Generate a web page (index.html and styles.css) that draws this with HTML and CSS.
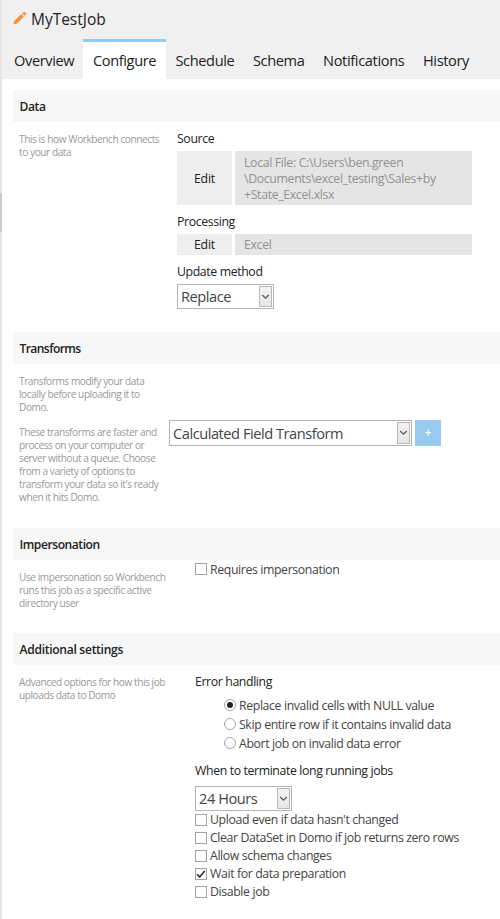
FILE: index.html
```
<!DOCTYPE html>
<html lang="en">
<head>
<meta charset="utf-8">
<title>MyTestJob</title>
<link rel="stylesheet" href="styles.css">
</head>
<body>
<div class="app">
  <aside class="rail"><div class="rail-thumb"></div></aside>
  <main class="panel">
    <header class="header">
      <div class="title-row">
        <svg class="pencil" width="14" height="14" viewBox="0 0 14 14"><path d="M1 10.2 8.3 3.1l2.5 2.6-7.2 7L.7 13.3zM9.1 2.3l1.4-1.4q.6-.5 1.2 0l1.2 1.2q.6.6 0 1.2l-1.3 1.5z" fill="#fb8d34"/></svg>
        <h1><span>MyTestJob</span></h1>
      </div>
      <nav class="tabs">
        <a class="tab overview"><span>Overview</span></a>
        <a class="tab configure active"><span>Configure</span></a>
        <a class="tab schedule"><span>Schedule</span></a>
        <a class="tab schema"><span>Schema</span></a>
        <a class="tab notifications"><span>Notifications</span></a>
        <a class="tab history"><span>History</span></a>
      </nav>
    </header>

    <section class="section data">
      <h2><span>Data</span></h2>
      <div class="body">
        <div class="desc"><p>This is how Workbench connects<br>to your data</p></div>
        <div class="fields">
          <div class="label"><span>Source</span></div>
          <div class="edit-row source">
            <button class="edit">Edit</button>
            <div class="value">Local File: C:\Users\ben.green<br>\Documents\excel_testing\Sales+by<br>+State_Excel.xlsx</div>
          </div>
          <div class="label processing"><span>Processing</span></div>
          <div class="edit-row">
            <button class="edit">Edit</button>
            <div class="value">Excel</div>
          </div>
          <div class="label update"><span>Update method</span></div>
          <div class="select small"><span>Replace</span><i class="arrow"><svg width="9" height="6" viewBox="0 0 9 6"><path d="M1.2 1l3.3 3.2L7.8 1" fill="none" stroke="#555" stroke-width="1.2"/></svg></i></div>
        </div>
      </div>
    </section>

    <section class="section transforms">
      <h2><span>Transforms</span></h2>
      <div class="body">
        <div class="desc">
          <p>Transforms modify your data<br>locally before uploading it to<br>Domo.</p>
          <p>These transforms are faster and<br>process on your computer or<br>server without a queue. Choose<br>from a variety of options to<br>transform your data so it's ready<br>when it hits Domo.</p>
        </div>
        <div class="fields adder">
          <div class="select wide"><span>Calculated Field Transform</span><i class="arrow"><svg width="9" height="6" viewBox="0 0 9 6"><path d="M1.2 1l3.3 3.2L7.8 1" fill="none" stroke="#555" stroke-width="1.2"/></svg></i></div>
          <button class="add">+</button>
        </div>
      </div>
    </section>

    <section class="section impersonation">
      <h2><span>Impersonation</span></h2>
      <div class="body">
        <div class="desc"><p>Use impersonation so Workbench<br>runs this job as a specific active<br>directory user</p></div>
        <div class="fields">
          <div class="check"><i class="box"></i><span>Requires impersonation</span></div>
        </div>
      </div>
    </section>

    <section class="section additional">
      <h2><span>Additional settings</span></h2>
      <div class="body">
        <div class="desc"><p>Advanced options for how this job<br>uploads data to Domo</p></div>
        <div class="fields">
          <div class="label"><span>Error handling</span></div>
          <div class="radios">
            <div class="radio"><i class="dot on"></i><span>Replace invalid cells with NULL value</span></div>
            <div class="radio"><i class="dot"></i><span>Skip entire row if it contains invalid data</span></div>
            <div class="radio"><i class="dot"></i><span>Abort job on invalid data error</span></div>
          </div>
          <div class="label terminate"><span>When to terminate long running jobs</span></div>
          <div class="select small"><span>24 Hours</span><i class="arrow"><svg width="9" height="6" viewBox="0 0 9 6"><path d="M1.2 1l3.3 3.2L7.8 1" fill="none" stroke="#555" stroke-width="1.2"/></svg></i></div>
          <div class="checks">
            <div class="check"><i class="box"></i><span>Upload even if data hasn't changed</span></div>
            <div class="check"><i class="box"></i><span>Clear DataSet in Domo if job returns zero rows</span></div>
            <div class="check"><i class="box"></i><span>Allow schema changes</span></div>
            <div class="check"><i class="box"><svg width="10" height="10" viewBox="0 0 10 10"><path d="M1 5.2l2.7 2.7L8.7 2" fill="none" stroke="#222" stroke-width="1.5"/></svg></i><span>Wait for data preparation</span></div>
            <div class="check"><i class="box"></i><span>Disable job</span></div>
          </div>
        </div>
      </div>
    </section>
  </main>
</div>
</body>
</html>
```
FILE: styles.css
```
* { box-sizing: border-box; }
body { margin: 0; background: #fff; color: #222; font: 12.3px/18px "Open Sans", "Noto Sans", sans-serif; letter-spacing: -.38px; white-space: nowrap; }
h1, h2, p { margin: 0; font-weight: 400; }
button { border: 0; padding: 0; font: inherit; color: inherit; letter-spacing: -.2px; }
.app { display: flex; height: 919px; overflow: hidden; }
.rail { flex: 0 0 2px; background: #e6e6e6; padding-top: 193px; }
.rail-thumb { height: 39px; background: #cdcdcd; }
.panel { flex: 1; min-width: 0; }

.header { height: 79px; background: #f0f0f0; }
.title-row { display: flex; height: 39px; padding: 11px 0 0 11px; }
.pencil { flex: none; }
h1 { margin: 0 0 0 4px; font-size: 15.5px; line-height: 16px; letter-spacing: -.02px; }
.tabs { display: flex; height: 40px; font-size: 14.6px; }
.tab { flex: none; padding-top: 12px; line-height: 18px; }
.overview { width: 81px; padding-left: 12px; }
.configure { width: 83px; padding-left: 10px; }
.schedule { width: 77px; padding-left: 9.5px; }
.schema { width: 78px; padding-left: 10px; }
.notifications { width: 101px; padding-left: 2px; letter-spacing: -.35px; }
.history { padding-left: 1px; letter-spacing: -.4px; }
.tab.active { background: #fff; border-top: 3px solid #97caef; padding-top: 9px; }

.section { margin-left: 11px; }
.data { margin-top: 11px; height: 242px; }
.transforms { height: 196px; }
.impersonation { height: 105px; }
h2 { height: 32px; background: #f7f7f7; padding-left: 6.5px; font-size: 12.1px; font-weight: 600; line-height: 33px; }
.transforms h2 { letter-spacing: -.6px; line-height: 34px; }
.impersonation h2 { letter-spacing: -.45px; }
.additional h2 { letter-spacing: -.3px; }
.body { display: flex; }
.desc { flex: none; width: 164px; padding: 11px 0 0 6px; color: #999; font-size: 10.1px; line-height: 12.95px; letter-spacing: -.43px; }
.desc p + p { margin-top: 12px; }
.transforms .desc { width: 156px; }
.impersonation .desc, .additional .desc { width: 182px; }

.data .fields { padding-top: 8px; }
.edit-row { display: flex; gap: 3px; height: 21px; }
.edit-row.source { height: 54px; margin-top: 3px; }
.edit { width: 55px; background: #eee; }
.source .edit { padding-top: 2px; }
.value { width: 237px; background: #e5e5e5; color: #929292; padding: 3px 0 0 9px; line-height: 16.2px; letter-spacing: -.34px; }
.source .value { padding-top: 4px; }
.processing { margin-top: 8px; }
.update { margin-top: 8px; margin-bottom: 3px; }
.processing + .edit-row { margin-top: 3px; }

.select { display: flex; justify-content: space-between; border: 1px solid #b4b4b4; background: #fff; color: #444; font-size: 14.6px; padding: 1px 1px 1px 3px; letter-spacing: -.45px; }
.select span { line-height: 21px; }
.select.wide span { line-height: 23px; }
.small { width: 97px; height: 25px; }
.wide { width: 243px; height: 26px; }
.arrow { display: flex; align-items: center; justify-content: center; width: 13px; border: 1px solid #b8b8b8; background: linear-gradient(#f3f3f3, #e6e6e6); }
.arrow svg { flex: none; }
.adder { display: flex; gap: 3px; padding-top: 56px; }
.add { width: 26px; height: 26px; background: #97caef; color: #fff; font-size: 12px; font-weight: 600; }

.impersonation .fields { padding-top: 0; }
.check { display: flex; align-items: center; height: 17.9px; color: #444; }
.impersonation .check span { padding-top: 2px; }
.box { display: flex; width: 12px; height: 12px; border: 1px solid #a3a3a3; margin-right: 3px; background: #fff; }
.box svg { flex: none; }
.additional .fields { padding-top: 8px; }
.radios { padding: 4px 0 0 29px; }
.radio { display: flex; align-items: center; height: 19.4px; color: #444; }
.radio span { padding-top: 2px; }
.dot { display: flex; width: 12px; height: 12px; border: 1px solid #a6a6a6; border-radius: 50%; margin-right: 3px; align-items: center; justify-content: center; }
.dot.on::after { content: ""; width: 6px; height: 6px; border-radius: 50%; background: #222; }
.terminate { margin: 9px 0 6px; }
```
